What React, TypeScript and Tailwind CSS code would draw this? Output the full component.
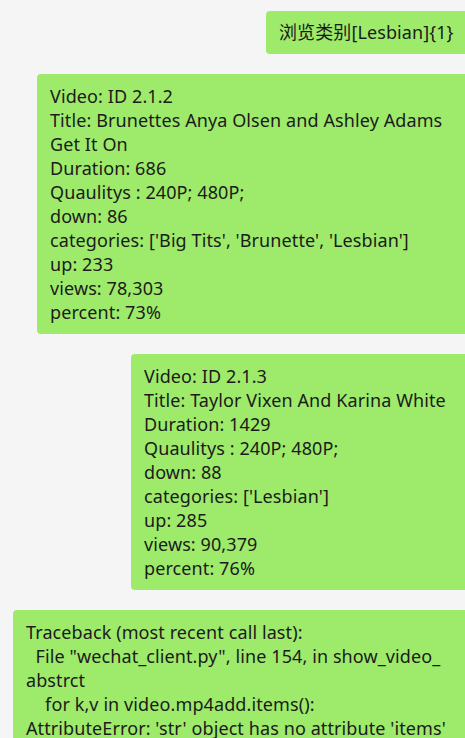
import React from 'react';

const Bubble: React.FC<{ lines: string[]; offset: string; extra?: string }> = ({ lines, offset, extra }) => (
  <div className={`${offset} rounded-l-[4px] bg-[#9eea6a] text-[#1b1b1b] whitespace-pre ${extra ?? 'pl-[13px] py-[10px]'}`}>
    {lines.map((l, i) => (
      <div key={i} className="h-6 leading-6">{l}</div>
    ))}
  </div>
);

const App: React.FC = () => {
  return (
    <div className="w-[465px] h-[738px] overflow-hidden bg-[#f5f5f5] pt-[11px] text-[18px] tracking-[0.1px] font-['Noto_Sans','Noto_Sans_CJK_SC',sans-serif]">
      <div className="flex flex-col gap-5">
        <Bubble offset="ml-[266px]" lines={['浏览类别[Lesbian]{1}']} extra="pl-[13px] pt-[9px] pb-[10px]" />
        <Bubble
          offset="ml-[37px]"
          lines={[
            'Video: ID 2.1.2',
            'Title: Brunettes Anya Olsen and Ashley Adams',
            'Get It On',
            'Duration: 686',
            'Quaulitys : 240P; 480P;',
            'down: 86',
            "categories: ['Big Tits', 'Brunette', 'Lesbian']",
            'up: 233',
            'views: 78,303',
            'percent: 73%',
          ]}
        />
        <Bubble
          offset="ml-[131px]"
          lines={[
            'Video: ID 2.1.3',
            'Title: Taylor Vixen And Karina White',
            'Duration: 1429',
            'Quaulitys : 240P; 480P;',
            'down: 88',
            "categories: ['Lesbian']",
            'up: 285',
            'views: 90,379',
            'percent: 76%',
          ]}
        />
        <Bubble
          offset="ml-[13px]"
          lines={[
            'Traceback (most recent call last):',
            '  File "wechat_client.py", line 154, in show_video_',
            'abstrct',
            '    for k,v in video.mp4add.items():',
            "AttributeError: 'str' object has no attribute 'items'",
          ]}
        />
      </div>
    </div>
  );
};

export default App;
